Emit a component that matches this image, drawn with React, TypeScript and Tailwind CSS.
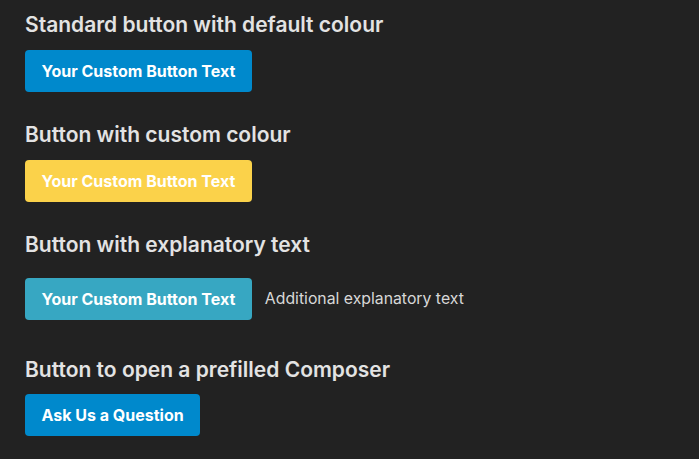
const buttonBase =
  "inline-flex items-center h-[42px] px-[16.5px] rounded-[4px] text-white text-[16px] leading-none font-bold";

const App = () => {
  return (
    <div
      className="min-h-screen bg-[#222222] px-[25px] pt-[10px]"
      style={{ fontFamily: "Inter, 'Noto Sans', sans-serif" }}
    >
      <section>
        <h3 className="text-[21px] leading-[30px] font-semibold text-[#e3e3e3]">
          Standard button with default colour
        </h3>
        <div className="mt-[10px]">
          <button className={`${buttonBase} bg-[#0089cc]`}>Your Custom Button Text</button>
        </div>
      </section>

      <section className="mt-[28px]">
        <h3 className="text-[21px] leading-[30px] font-semibold text-[#e3e3e3]">
          Button with custom colour
        </h3>
        <div className="mt-[10px]">
          <button className={`${buttonBase} bg-[#fbd24a]`}>Your Custom Button Text</button>
        </div>
      </section>

      <section className="mt-[28px] pb-[7px]">
        <h3 className="text-[21px] leading-[30px] font-semibold text-[#e3e3e3]">
          Button with explanatory text
        </h3>
        <div className="mt-[18px] flex items-center gap-[13px]">
          <button className={`${buttonBase} bg-[#37a7c2]`}>Your Custom Button Text</button>
          <span className="text-[15.8px] text-[#d8d8d8]">Additional explanatory text</span>
        </div>
      </section>

      <section className="mt-[28px]">
        <h3 className="text-[21px] leading-[30px] font-semibold text-[#e3e3e3]">
          Button to open a prefilled Composer
        </h3>
        <div className="mt-[9px]">
          <button className={`${buttonBase} bg-[#0089cc]`}>Ask Us a Question</button>
        </div>
      </section>
    </div>
  );
};

export default App;
